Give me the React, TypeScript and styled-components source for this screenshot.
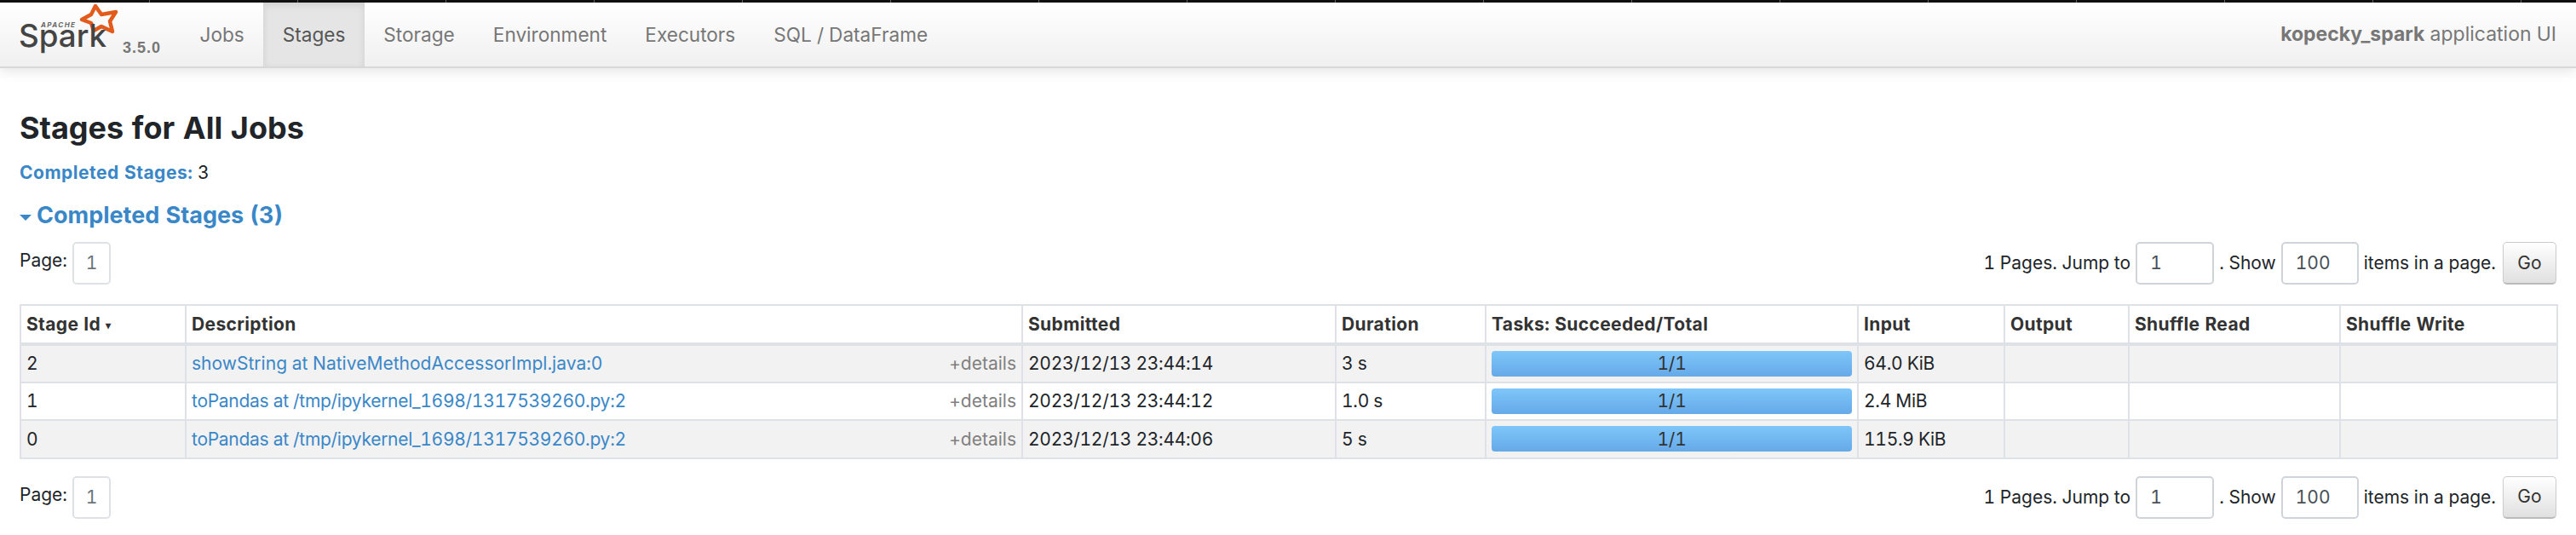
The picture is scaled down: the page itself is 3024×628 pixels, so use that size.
import React from "react";
import styled, { createGlobalStyle } from "styled-components";

const GlobalStyle = createGlobalStyle`
  html, body {
    margin: 0;
    padding: 0;
    background: #fff;
    color: #212529;
    font-family: Inter, "Liberation Sans", sans-serif;
    font-size: 21px;
    font-variant-numeric: tabular-nums;
    line-height: 1.5;
  }
`;

const TopStrip = styled.div`
  height: 3px;
  background-color: #111;
  background-image: repeating-linear-gradient(
    to right,
    transparent 0,
    transparent 173px,
    #666 173px,
    #666 174px
  );
  background-position: 2px 0;
`;

const Navbar = styled.nav`
  height: 77px;
  display: flex;
  align-items: stretch;
  box-sizing: border-box;
  padding: 0 23px 0 20px;
  background: linear-gradient(to bottom, #ffffff 0%, #f0f0f0 100%);
  border-bottom: 2px solid #d8d8d8;
  box-shadow: 0 5px 12px rgba(0, 0, 0, 0.09);
  position: relative;
`;

const Brand = styled.a`
  display: flex;
  align-items: flex-start;
  width: 192px;
  flex-shrink: 0;
`;

const Version = styled.span`
  font-family: "Liberation Sans", Arial, sans-serif;
  font-weight: 700;
  font-size: 18px;
  letter-spacing: 1px;
  line-height: 1;
  color: #777;
  margin-top: 44px;
`;

const NavItem = styled.a<{ $active?: boolean }>`
  display: flex;
  align-items: center;
  padding: 0 22.5px;
  font-size: 22.6px;
  color: ${(p) => (p.$active ? "#555" : "#777")};
  background: ${(p) => (p.$active ? "#e5e5e5" : "transparent")};
  box-shadow: ${(p) => (p.$active ? "inset 0 3px 8px rgba(0, 0, 0, 0.1)" : "none")};
`;

const AppName = styled.p`
  margin: 0 0 0 auto;
  align-self: center;
  font-size: 23px;
  color: #777;

  strong {
    font-weight: 700;
  }
`;

const Content = styled.main`
  padding: 0 23px;
`;

const Title = styled.h3`
  margin: 49px 0 0;
  font-size: 36px;
  line-height: 42px;
  font-weight: 700;
  color: #212529;
`;

const Summary = styled.p`
  margin: 16px 0 0;
  line-height: 31px;
`;

const SummaryLabel = styled.strong`
  font-weight: 700;
  letter-spacing: 0.5px;
  color: #3a87c8;
`;

const CollapseHeading = styled.h4`
  display: flex;
  align-items: center;
  gap: 6px;
  margin: 19px 0 0;
  font-size: 27px;
  line-height: 32px;
  font-weight: 700;
  color: #3a87c8;
`;

const Caret = styled.span`
  width: 0;
  height: 0;
  margin-top: 5px;
  border-left: 7px solid transparent;
  border-right: 7px solid transparent;
  border-top: 7px solid #3a87c8;
`;

const PageRow = styled.div<{ $top: number }>`
  display: flex;
  justify-content: space-between;
  margin-top: ${(p) => p.$top}px;
`;

const PagerGroup = styled.div`
  display: flex;
  align-items: flex-start;
`;

const PagerLabel = styled.span`
  line-height: 44px;
  margin-right: 6px;
`;

const PageBox = styled.span`
  display: flex;
  align-items: center;
  justify-content: center;
  box-sizing: border-box;
  width: 45px;
  height: 50px;
  border: 2px solid #dee2e6;
  border-radius: 5px;
  color: #6c757d;
`;

const FormGroup = styled.form`
  display: flex;
  align-items: center;
  height: 50px;
`;

const FormText = styled.span`
  white-space: pre;
`;

const NumberBox = styled.span<{ $width: number }>`
  display: flex;
  align-items: center;
  box-sizing: border-box;
  width: ${(p) => p.$width}px;
  height: 50px;
  margin: 0 6px;
  padding-left: 15px;
  border: 2px solid #ced4da;
  border-radius: 5px;
  color: #495057;
`;

const GoButton = styled.button`
  box-sizing: border-box;
  width: 63px;
  height: 50px;
  margin-left: 8px;
  padding: 0;
  font: inherit;
  color: #333;
  background: linear-gradient(to bottom, #ffffff 0%, #e0e0e0 100%);
  border: 1px solid #ccc;
  border-bottom: 2px solid #bbb;
  border-radius: 5px;
`;

const StageTable = styled.table`
  width: 100%;
  margin-top: 23px;
  border-collapse: collapse;
  table-layout: fixed;
`;

const HeadCell = styled.th`
  box-sizing: border-box;
  height: 46px;
  padding: 0 6px;
  border: 2px solid #dee2e6;
  border-bottom-width: 4px;
  text-align: left;
  font-weight: 700;
  letter-spacing: 0.36px;
  color: #333;
`;

const SortMark = styled.span`
  font-size: 12px;
  margin-left: 6px;
  vertical-align: 2px;
`;

const Row = styled.tr<{ $odd: boolean }>`
  background: ${(p) => (p.$odd ? "#f2f2f2" : "#fff")};
`;

const Cell = styled.td`
  box-sizing: border-box;
  height: 44.5px;
  padding: 0 6px;
  border: 2px solid #dee2e6;
  letter-spacing: -0.3px;
`;

const DescriptionRow = styled.div`
  display: flex;
  justify-content: space-between;
  letter-spacing: 0;
`;

const StageLink = styled.a<{ $tight: boolean }>`
  color: #3a87c8;
  letter-spacing: ${(p) => (p.$tight ? "-0.29px" : "0.02px")};
`;

const Details = styled.span`
  color: #808080;
`;

const Progress = styled.div`
  height: 30px;
  display: flex;
  align-items: center;
  justify-content: center;
  border-radius: 4px;
  background: linear-gradient(to bottom, #7fc6fa 0%, #65a9e8 100%);
  color: #333;
`;

const LogoSvg = styled.svg`
  flex-shrink: 0;
`;

// drawn in page coordinates minus the navbar origin (20, 3)
const SparkLogo = () => (
  <LogoSvg width="124" height="68" viewBox="0 0 124 68" aria-label="Apache Spark">
    <path
      d="M92 4 L99 14 L116 11 L109 22 L112 34 L99 28 L90 33 L87 24 L76 20 L87 14 Z"
      fill="none"
      stroke="#e25a1c"
      strokeWidth="4.5"
      strokeLinejoin="round"
    />
    <text
      x="28"
      y="29"
      fontFamily="Inter, sans-serif"
      fontSize="8"
      fontWeight="700"
      fontStyle="italic"
      letterSpacing="1.4"
      fill="#666"
    >
      APACHE
    </text>
    <text
      x="2"
      y="52"
      fontFamily="Inter, sans-serif"
      fontSize="37"
      fontWeight="500"
      textLength="103"
      lengthAdjust="spacingAndGlyphs"
      fill="#444"
    >
      Spark
    </text>
  </LogoSvg>
);

const navItems = ["Jobs", "Stages", "Storage", "Environment", "Executors", "SQL / DataFrame"];

const stages = [
  { id: 2, desc: "showString at NativeMethodAccessorImpl.java:0", time: "2023/12/13 23:44:14", dur: "3 s", input: "64.0 KiB" },
  { id: 1, desc: "toPandas at /tmp/ipykernel_1698/1317539260.py:2", time: "2023/12/13 23:44:12", dur: "1.0 s", input: "2.4 MiB" },
  { id: 0, desc: "toPandas at /tmp/ipykernel_1698/1317539260.py:2", time: "2023/12/13 23:44:06", dur: "5 s", input: "115.9 KiB" },
];

const columns = [194, 982, 368, 176, 437, 172, 146, 248, 255];

const Pager = ({ top }: { top: number }) => (
  <PageRow $top={top}>
    <PagerGroup>
      <PagerLabel>Page:</PagerLabel>
      <PageBox>1</PageBox>
    </PagerGroup>
    <FormGroup>
      <FormText>1 Pages. Jump to</FormText>
      <NumberBox $width={92}>1</NumberBox>
      <FormText>. Show</FormText>
      <NumberBox $width={91}>100</NumberBox>
      <FormText>items in a page.</FormText>
      <GoButton type="button">Go</GoButton>
    </FormGroup>
  </PageRow>
);

export default function App() {
  return (
    <>
      <GlobalStyle />
      <TopStrip />
      <Navbar>
        <Brand>
          <SparkLogo />
          <Version>3.5.0</Version>
        </Brand>
        {navItems.map((item) => (
          <NavItem key={item} $active={item === "Stages"}>
            {item}
          </NavItem>
        ))}
        <AppName>
          <strong>kopecky_spark</strong> application UI
        </AppName>
      </Navbar>
      <Content>
        <Title>Stages for All Jobs</Title>
        <Summary>
          <SummaryLabel>Completed Stages:</SummaryLabel> 3
        </Summary>
        <CollapseHeading>
          <Caret />
          Completed Stages (3)
        </CollapseHeading>
        <Pager top={15} />
        <StageTable>
          <colgroup>
            {columns.map((w, i) => (
              <col key={i} style={{ width: w }} />
            ))}
          </colgroup>
          <thead>
            <tr>
              <HeadCell>
                Stage Id<SortMark>▾</SortMark>
              </HeadCell>
              <HeadCell>Description</HeadCell>
              <HeadCell>Submitted</HeadCell>
              <HeadCell>Duration</HeadCell>
              <HeadCell>Tasks: Succeeded/Total</HeadCell>
              <HeadCell>Input</HeadCell>
              <HeadCell>Output</HeadCell>
              <HeadCell>Shuffle Read</HeadCell>
              <HeadCell>Shuffle Write</HeadCell>
            </tr>
          </thead>
          <tbody>
            {stages.map((s, i) => (
              <Row key={s.id} $odd={i % 2 === 0}>
                <Cell>{s.id}</Cell>
                <Cell>
                  <DescriptionRow>
                    <StageLink $tight={s.desc.includes("/tmp")}>{s.desc}</StageLink>
                    <Details>+details</Details>
                  </DescriptionRow>
                </Cell>
                <Cell>{s.time}</Cell>
                <Cell>{s.dur}</Cell>
                <Cell>
                  <Progress>1/1</Progress>
                </Cell>
                <Cell>{s.input}</Cell>
                <Cell />
                <Cell />
                <Cell />
              </Row>
            ))}
          </tbody>
        </StageTable>
        <Pager top={20} />
      </Content>
    </>
  );
}
